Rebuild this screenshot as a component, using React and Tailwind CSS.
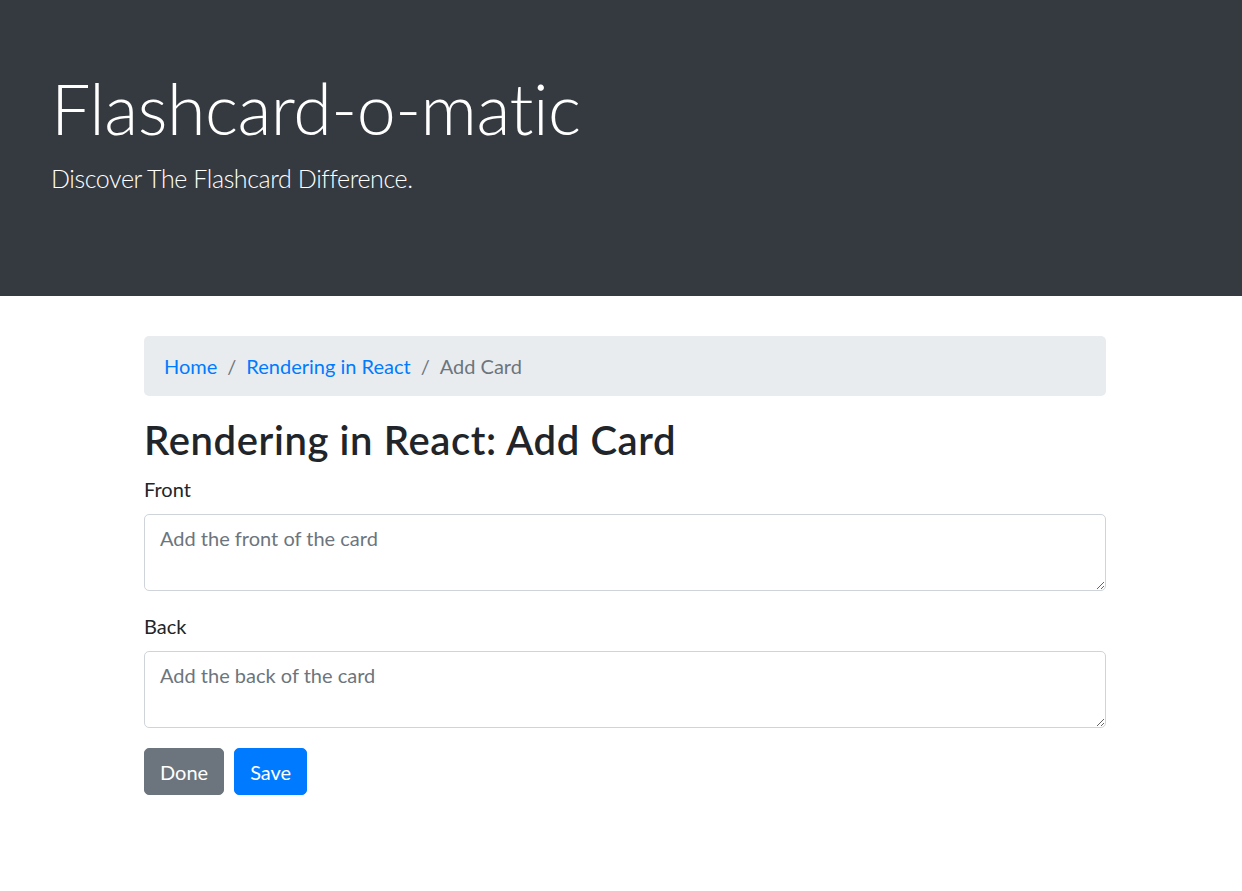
import React from "react";

export default function App() {
  return (
    <div className="min-h-[891px] bg-white font-['Lato',sans-serif] text-[#212529]">
      {/* JUMBOTRON */}
      <header className="h-[296px] bg-[#343a40] pl-[51px] pt-[66px] text-white">
        <h1 className="mb-[10px] text-[70px] font-light leading-[84px] tracking-[-0.5px]">
          Flashcard-o-matic
        </h1>
        <p className="text-[25px] font-light leading-[37.5px] tracking-[-0.4px]">
          Discover The Flashcard Difference.
        </p>
      </header>

      {/* CONTENT */}
      <main className="ml-[144px] mt-[40px] w-[962px] pb-[40px]">
        <nav className="mb-[20px] flex items-center rounded-[5px] bg-[#e9ecef] px-[20px] py-[15px] text-[20px] leading-[30px]">
          <a href="#" className="text-[#007bff]">Home</a>
          <span className="px-[10px] text-[#6c757d]">/</span>
          <a href="#" className="text-[#007bff]">Rendering in React</a>
          <span className="px-[10px] text-[#6c757d]">/</span>
          <span className="text-[#6c757d]">Add Card</span>
        </nav>

        <h2 className="mb-[10px] text-[40px] font-semibold leading-[48px] tracking-[0.6px]">
          Rendering in React: Add Card
        </h2>

        <form>
          <div className="mb-[20px]">
            <label className="mb-[10px] block text-[20px] leading-[30px]">Front</label>
            <textarea
              rows={2}
              placeholder="Add the front of the card"
              className="block h-[77px] w-full rounded-[5px] border border-[#ced4da] px-[15px] py-[7.5px] text-[20px] leading-[30px] text-[#495057] placeholder:text-[#6c757d]"
            />
          </div>
          <div className="mb-[20px]">
            <label className="mb-[10px] block text-[20px] leading-[30px]">Back</label>
            <textarea
              rows={2}
              placeholder="Add the back of the card"
              className="block h-[77px] w-full rounded-[5px] border border-[#ced4da] px-[15px] py-[7.5px] text-[20px] leading-[30px] text-[#495057] placeholder:text-[#6c757d]"
            />
          </div>
          <div className="flex gap-[10px]">
            <button type="button" className="rounded-[5px] border border-[#6c757d] bg-[#6c757d] px-[15px] py-[7.5px] text-[20px] leading-[30px] text-white">
              Done
            </button>
            <button type="button" className="rounded-[5px] border border-[#007bff] bg-[#007bff] px-[15px] py-[7.5px] text-[20px] leading-[30px] text-white">
              Save
            </button>
          </div>
        </form>
      </main>
    </div>
  );
}
